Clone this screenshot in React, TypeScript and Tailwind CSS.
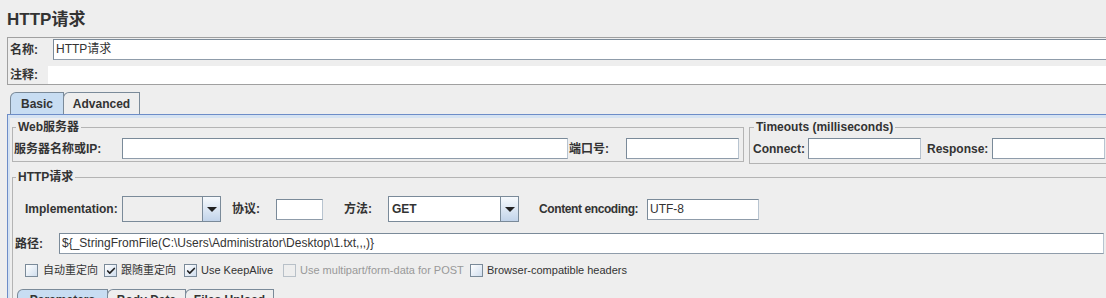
import { Check } from 'lucide-react'

const FONT = "font-['Liberation_Sans','Noto_Sans_CJK_SC',sans-serif]"

function Field({ w, value, className = '' }: { w: string; value?: string; className?: string }) {
  return (
    <div className={`${w} h-[21px] shrink-0 bg-white border border-[#7a8a99] border-r-[#b8c4d0] border-b-[#8f9caa] px-[2px] text-[12px] leading-[19px] text-[#333] whitespace-nowrap overflow-hidden ${className}`}>
      {value}
    </div>
  )
}

function Combo({ fieldW, value, disabled }: { fieldW: string; value?: string; disabled?: boolean }) {
  return (
    <div className="flex h-[26px] shrink-0">
      <div className={`${fieldW} h-full border border-[#7a8a99] border-r-0 px-[3px] text-[12px] leading-[24px] text-[#333] ${disabled ? 'bg-[#eeeeee]' : 'bg-white'}`}>
        {value}
      </div>
      <div className="w-[19px] h-full border border-[#7a8a99] bg-gradient-to-b from-[#f7fafd] to-[#c2d4ea] flex items-center justify-center">
        <div className="w-0 h-0 border-l-[5px] border-r-[5px] border-t-[5px] border-l-transparent border-r-transparent border-t-[#222]" />
      </div>
    </div>
  )
}

function Box({ checked, disabled }: { checked?: boolean; disabled?: boolean }) {
  return (
    <div className={`w-[13px] h-[13px] shrink-0 border flex items-center justify-center ${disabled ? 'border-[#b8c0c8] bg-[#eeeeee]' : 'border-[#7a8a99] bg-gradient-to-br from-white to-[#d0deee]'}`}>
      {checked && <Check className="w-[10px] h-[10px] text-[#222]" strokeWidth={4} />}
    </div>
  )
}

function Tab({ label, w, selected, top }: { label: string; w: string; selected?: boolean; top?: boolean }) {
  return (
    <div className={`${w} h-[22px] shrink-0 border border-b-0 border-[#7a8a99] rounded-tl-[6px] -ml-px first:ml-0 flex justify-center text-[12px] leading-[14px] font-bold text-[#333] ${top ? 'items-start pt-[3px]' : 'items-center'} ${selected ? 'bg-[#c8ddf2]' : 'bg-[#eeeeee]'}`}>
      {label}
    </div>
  )
}

export default function App() {
  return (
    <div className={`w-[1106px] h-[298px] overflow-hidden bg-[#eeeeee] text-[#333] ${FONT}`}>
      <div className="pl-[7px] pt-[9px] h-[31px] text-[17px] leading-[22px] font-bold">HTTP请求</div>

      {/* name / comment */}
      <div className="ml-[7px] mt-[6px] w-[1110px] border border-[#a0a0a0] pt-[1px]">
        <div className="flex items-center h-[21px]">
          <div className="w-[45px] pl-[2px] text-[12px] font-bold">名称:</div>
          <Field w="flex-1" value="HTTP请求" />
        </div>
        <div className="flex items-center h-[18px] mt-[6px]">
          <div className="w-[40px] pl-[2px] text-[12px] font-bold">注释:</div>
          <div className="flex-1 h-full bg-white" />
        </div>
      </div>

      {/* tabs */}
      <div className="ml-[10px] mt-[7px] flex">
        <Tab label="Basic" w="w-[54px]" selected />
        <Tab label="Advanced" w="w-[77px]" />
      </div>

      <div className="ml-[7px] w-[1110px] border-t border-l border-[#6d8dc8]">
        <div className="border-t-[3px] border-l-[2px] border-[#d6e3f2]">
          <div className="flex items-start">
            <fieldset className="ml-[2px] mt-[2px] w-[732px] border border-[#b4b4b4] pb-[2px]">
              <legend className="ml-[3px] px-[2px] text-[12px] leading-[14px] font-bold">Web服务器</legend>
              <div className="flex items-center h-[21px] mt-[4px]">
                <div className="w-[109px] pl-[1px] text-[12px] font-bold">服务器名称或IP:</div>
                <Field w="w-[446px]" />
                <div className="w-[58px] pl-[1px] text-[12px] font-bold">端口号:</div>
                <Field w="w-[113px]" />
              </div>
            </fieldset>
            <fieldset className="ml-[5px] mt-[2px] w-[362px] border border-[#b4b4b4] pb-[4px]">
              <legend className="ml-[4px] px-[2px] text-[12px] leading-[14px] font-bold">Timeouts (milliseconds)</legend>
              <div className="flex items-center h-[21px] mt-[4px]">
                <div className="w-[58px] pl-[3px] text-[12px] font-bold">Connect:</div>
                <Field w="w-[113px]" />
                <div className="w-[71px] pl-[6px] text-[12px] font-bold">Response:</div>
                <Field w="w-[113px]" />
              </div>
            </fieldset>
          </div>

          <fieldset className="ml-[2px] mt-[6px] w-[1100px] border border-[#b4b4b4] pb-[20px]">
            <legend className="ml-[3px] px-[2px] text-[12px] leading-[14px] font-bold">HTTP请求</legend>

            <div className="flex items-center h-[26px] mt-[12px] pl-[12px] text-[12px] font-bold">
              <div className="w-[97px]">Implementation:</div>
              <Combo fieldW="w-[80px]" disabled />
              <div className="ml-[11px] w-[44px]">协议:</div>
              <Field w="w-[47px]" />
              <div className="ml-[21px] w-[44px]">方法:</div>
              <Combo fieldW="w-[112px]" value="GET" />
              <div className="ml-[20px] w-[108px] tracking-[-0.4px]">Content encoding:</div>
              <Field w="w-[112px]" value="UTF-8" className="font-normal" />
            </div>

            <div className="flex items-center h-[21px] mt-[11px] pl-[2px]">
              <div className="w-[44px] text-[12px] font-bold">路径:</div>
              <Field w="w-[1045px]" value="${_StringFromFile(C:\Users\Administrator\Desktop\1.txt,,,)}" />
            </div>

            <div className="flex items-center h-[13px] mt-[10px] pl-[12px] text-[11px] leading-[13px]">
              <div className="w-[79px] flex items-center gap-[5px]"><Box /><span>自动重定向</span></div>
              <div className="w-[80px] flex items-center gap-[4px]"><Box checked /><span>跟随重定向</span></div>
              <div className="w-[99px] flex items-center gap-[4px]"><Box checked /><span>Use KeepAlive</span></div>
              <div className="w-[187px] flex items-center gap-[4px] text-[#999]"><Box disabled /><span>Use multipart/form-data for POST</span></div>
              <div className="flex items-center gap-[4px]"><Box /><span>Browser-compatible headers</span></div>
            </div>

            <div className="flex mt-[12px] pl-[4px]">
              <Tab label="Parameters" w="w-[91px]" selected top />
              <Tab label="Body Data" w="w-[79px]" top />
              <Tab label="Files Upload" w="w-[89px]" top />
            </div>
          </fieldset>
        </div>
      </div>
    </div>
  )
}
